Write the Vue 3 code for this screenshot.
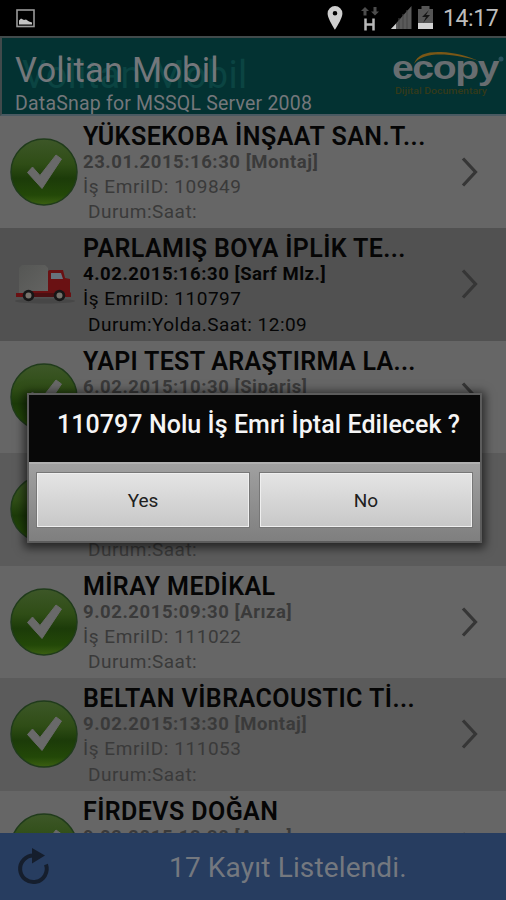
<template>
  <div class="screen">
    <div class="statusbar">
      <svg class="status-picture" width="20" height="20" viewBox="0 0 20 20">
        <rect x="1" y="1" width="17" height="16.500" fill="none" stroke="#999" stroke-width="1.600" />
        <path d="M3 15.500v-4l2-2 3 1.500 2-.5 3 2 3 1v2z" fill="#c4c4c4" />
      </svg>
      <svg class="status-icons" width="106" height="36" viewBox="0 0 106 36">
        <path fill-rule="evenodd" d="M8 6a7.400 7.400 0 0 0-7.400 7.400C.6 18.600 8 29.700 8 29.700s7.400-11.100 7.400-16.300A7.400 7.400 0 0 0 8 6zm0 5a2.300 2.300 0 1 1 0 4.600A2.300 2.300 0 0 1 8 11z" fill="#cfcfcf" />
        <path d="M38 7l-4 4h2.500v4.500h3V11H42zM48 15.500l4-4h-2.500V7h-3v4.500H44z" fill="#4c4c4c" />
        <path d="M38.500 18.500v12M46.500 18.500v12M38.500 24.500h8" fill="none" stroke="#b8b8b8" stroke-width="2.500" />
        <path d="M64 29L84.500 6v23z" fill="#5a5a5a" />
        <path d="M64 29l5-5.300V29z" fill="#d0d0d0" />
        <path d="M72 18v11M76 14v15M80 10v19" stroke="#444" stroke-width="1" />
        <path d="M94.500 6h8v3h3.500v20H91V9h3.500z" fill="#555" />
        <path d="M91 23h15v6H91z" fill="#d2d2d2" />
        <path d="M102 10l-7 7h4l-3 6 7-8h-4z" fill="#151515" />
      </svg>
      <span class="clock">14:17</span>
    </div>

    <header class="header">
      <span class="header-ghost">Volitan Mobil</span>
      <div class="header-texts">
        <h1>Volitan Mobil</h1>
        <p>DataSnap for MSSQL Server 2008</p>
      </div>
      <svg class="logo" width="116" height="64" viewBox="0 0 116 64">
        <path d="M24 28C27 18 38 15.500 51 16c14 .5 26 4 38 9C75 21 62 18.500 50 18.500 38 18.500 29 21 24 28z" fill="#7a5716" />
        <text class="logo-name" transform="translate(2 43) scale(1.15 1)">ecopy</text>
        <text class="logo-tag" x="5" y="58" textLength="92" lengthAdjust="spacingAndGlyphs">Dijital Documentary</text>
        <circle cx="111" cy="23" r="2.500" fill="#28515c" />
      </svg>
    </header>

    <main class="list">
      <article v-for="job in jobs" :key="job.id" class="job" :class="job.kind">
        <div class="job-icon">
          <svg v-if="job.kind === 'active'" class="truck" width="62" height="42" viewBox="0 0 62 42">
            <ellipse cx="31" cy="37" rx="30" ry="2.500" fill="#474747" />
            <path d="M5 4l3-3h23l3 3v27H5z" fill="url(#box)" />
            <path d="M2 29h7l5-2h20V7.500q0-1.500 2-1.500h13l2 8 5 1v13l1 1v4H2z" fill="#6a1113" />
            <path d="M14 29h28v4H14z" fill="#4b1012" />
            <path d="M37 9h10l2 6H37z" fill="#67727d" />
            <circle cx="14.500" cy="31.500" r="5.800" fill="#171717" />
            <circle cx="14.500" cy="31.500" r="3" fill="#77736c" />
            <circle cx="45.500" cy="31.500" r="5.800" fill="#171717" />
            <circle cx="45.500" cy="31.500" r="3" fill="#77736c" />
            <defs>
              <linearGradient id="box" x1="0" y1="0" x2="1" y2="1">
                <stop offset="0" stop-color="#555654" />
                <stop offset="1" stop-color="#646462" />
              </linearGradient>
            </defs>
          </svg>
          <svg v-else width="68" height="68" viewBox="0 0 68 68">
            <defs>
              <linearGradient :id="'ball' + job.id" x1="0" y1="0" x2="0" y2="1">
                <stop offset="0" stop-color="#3d5728" />
                <stop offset=".38" stop-color="#2f4d16" />
                <stop offset=".6" stop-color="#1c3b09" />
                <stop offset=".85" stop-color="#234808" />
                <stop offset="1" stop-color="#3c6012" />
              </linearGradient>
            </defs>
            <circle cx="34" cy="34" r="33" :fill="`url(#ball${job.id})`" stroke="#203b1b" stroke-width="1.500" />
            <path d="M17.500 34.500l5-5.500 7.500 8.500L46 17l5.500 4L32 50.500z" fill="#696969" stroke="#696969" stroke-width="1" stroke-linejoin="round" />
          </svg>
        </div>
        <div class="job-main">
          <strong :style="{ letterSpacing: job.spacing + 'px' }">{{ job.title }}</strong>
          <b>{{ job.date }}</b>
          <span>İş EmriID: {{ job.id }}</span>
          <span class="job-state">{{ job.state }}</span>
        </div>
        <svg class="chevron" width="18" height="32" viewBox="0 0 18 32">
          <path d="M2 2.500l12.500 13.500L2 29.500" fill="none" stroke="#363636" stroke-width="3.200" />
        </svg>
      </article>
    </main>

    <footer class="footer">
      <svg width="34" height="40" viewBox="0 0 34 40">
        <path d="M17 8.500A13.300 13.300 0 1 0 29 17.500" fill="none" stroke="#151e2d" stroke-width="4" />
        <path d="M15 1l13 7.500-13 8z" fill="#151e2d" />
      </svg>
      <span>17 Kayıt Listelendi.</span>
    </footer>

    <div class="dialog">
      <div class="dialog-title">110797 Nolu İş Emri İptal Edilecek ?</div>
      <div class="dialog-buttons">
        <button>Yes</button>
        <button>No</button>
      </div>
    </div>
  </div>
</template>

<script setup>
const jobs = [
  { id: 109849, kind: 'light', title: 'YÜKSEKOBA İNŞAAT SAN.T...', date: '23.01.2015:16:30 [Montaj]', state: 'Durum:Saat:', spacing: 0.48 },
  { id: 110797, kind: 'active', title: 'PARLAMIŞ BOYA İPLİK TE...', date: '4.02.2015:16:30 [Sarf Mlz.]', state: 'Durum:Yolda.Saat: 12:09', spacing: 0.38 },
  { id: 110904, kind: 'light', title: 'YAPI TEST ARAŞTIRMA LA...', date: '6.02.2015:10:30 [Siparis]', state: 'Durum:Saat:', spacing: 0.32 },
  { id: 110961, kind: 'alt', title: '', date: '', state: 'Durum:Saat:', spacing: 0 },
  { id: 111022, kind: 'light', title: 'MİRAY MEDİKAL', date: '9.02.2015:09:30 [Arıza]', state: 'Durum:Saat:', spacing: 0.4 },
  { id: 111053, kind: 'alt', title: 'BELTAN VİBRACOUSTIC Tİ...', date: '9.02.2015:13:30 [Montaj]', state: 'Durum:Saat:', spacing: 0.46 },
  { id: 111060, kind: 'light', title: 'FİRDEVS DOĞAN', date: '9.02.2015:13:30 [Arıza]', state: 'Durum:Saat:', spacing: 0.42 }
]
</script>

<style>
body { margin: 0; background: #000; }
</style>

<style scoped>
.screen { position: relative; width: 506px; height: 900px; overflow: hidden; display: flex; flex-direction: column; background: #666; font-family: Roboto, "Noto Sans", sans-serif; }
.statusbar { height: 36px; flex: none; display: flex; align-items: flex-start; background: #000; }
.status-picture { margin: 9px 0 0 16px; }
.status-icons { margin-left: 291px; flex: none; }
.clock { margin-left: 10px; font-size: 23px; line-height: 37px; letter-spacing: -0.4px; color: #bdbdbd; white-space: nowrap; }
.header { position: relative; box-sizing: border-box; height: 79.500px; flex: none; display: flex; justify-content: space-between; border: 2px solid #414a4b; border-right: none; border-bottom-color: #4a5a62; background: #033232; overflow: hidden; }
.header-texts { position: relative; padding: 11px 0 0 13px; color: #74777b; white-space: nowrap; }
.header-texts h1 { margin: 0; font-size: 34.500px; font-weight: 400; letter-spacing: 0.2px; line-height: 42px; }
.header-texts p { margin: 0; font-size: 19.500px; letter-spacing: 0.2px; line-height: 26px; }
.header-ghost { position: absolute; left: 20px; top: 14px; font-size: 38px; letter-spacing: 0.3px; line-height: 46px; color: #0b4442; white-space: nowrap; }
.logo { flex: none; margin-top: -2px; }
.logo-name { font-family: "Liberation Sans", Arial, sans-serif; font-size: 34px; font-weight: 700; letter-spacing: -1.2px; fill: #686d70; }
.logo-tag { font-size: 9.500px; font-weight: 500; fill: #343a19; }
.list { height: 717.500px; flex: none; overflow: hidden; }
.job { height: 112.500px; display: flex; align-items: center; background: #666; color: #3a3a3a; white-space: nowrap; }
.job.alt { background: #5b5b5b; }
.job.active { background: #515151; color: #050505; }
.job-icon { width: 83px; height: 68px; flex: none; box-sizing: border-box; padding-left: 10px; }
.truck { margin: 14px 0 0 4px; }
.job-main { align-self: flex-start; display: flex; flex-direction: column; flex: 1; min-width: 0; padding-top: 7.200px; }
.job-main strong { height: 27px; font-size: 25px; font-weight: 600; line-height: 27px; color: #050505; }
.job-main b { height: 24px; font-size: 18.500px; letter-spacing: 0.56px; line-height: 24px; }
.job-main span { height: 25.500px; font-size: 19px; letter-spacing: 0.55px; line-height: 25.500px; }
.job-main .job-state { padding-left: 5px; letter-spacing: 0.48px; }
.chevron { flex: none; margin-right: 27px; }
.footer { height: 67px; flex: none; display: flex; align-items: center; background: #273d60; color: #74787f; font-size: 28px; letter-spacing: 0.15px; white-space: nowrap; }
.footer svg { margin-left: 17px; }
.footer span { margin-left: 118px; padding-top: 2px; }
.dialog { position: absolute; left: 27px; top: 393px; width: 455px; height: 150px; box-sizing: border-box; display: flex; flex-direction: column; border: 2px solid #5c5c5c; box-shadow: 0 2px 9px 3px rgba(0, 0, 0, .6); background: #888; }
.dialog-title { height: 67px; box-sizing: border-box; padding-left: 28px; background: #080808; color: #f5f5f5; font-size: 25px; font-weight: 500; letter-spacing: 0.06px; line-height: 59px; white-space: nowrap; }
.dialog-buttons { flex: 1; display: flex; gap: 11px; padding: 9px 8px 14px; border-top: 2px solid #b0b0b0; background: linear-gradient(#a0a0a0, #7f7f7f); }
.dialog-buttons button { flex: 1; border: 1px solid #efefef; outline: 1px solid #777; background: linear-gradient(#e4e4e4, #c8c8c8); color: #202020; font-family: inherit; font-size: 19px; padding: 0; }
</style>
